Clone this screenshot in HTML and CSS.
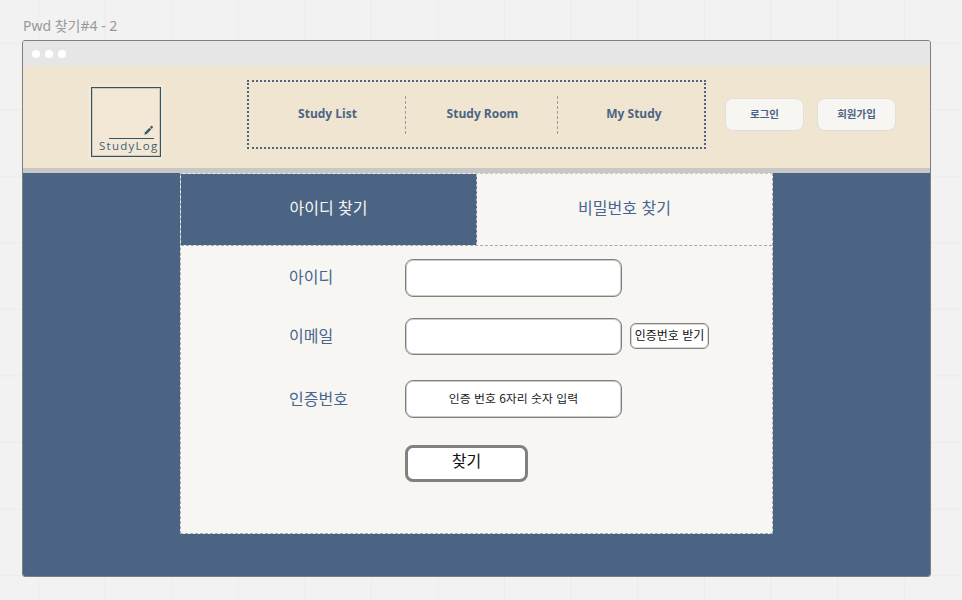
FILE: index.html
```html
<!DOCTYPE html>
<html lang="ko">
<head>
<meta charset="utf-8">
<title>Pwd 찾기#4 - 2</title>
<link rel="stylesheet" href="styles.css">
</head>
<body>
<div class="board">
  <div class="frame-title">Pwd 찾기#4 - 2</div>
  <div class="window">
    <div class="titlebar"><i class="dot"></i><i class="dot"></i><i class="dot"></i></div>
    <header class="header">
      <div class="logo-wrap">
        <div class="logo">
          <svg class="pen" width="11" height="11" viewBox="0 0 12 12"><path d="M1.5 10.5 L2.2 7.8 L7 3 L9 5 L4.2 9.8 Z" fill="#3a5f70"/><path d="M7.6 2.4 L8.8 1.2 Q9.6 .6 10.4 1.4 Q11.2 2.2 10.6 3 L9.6 4.4 Z" fill="#3a5f70"/></svg>
          <div class="logo-line"></div>
          <div class="logo-text">StudyLog</div>
        </div>
      </div>
      <nav class="nav">
        <a class="nav-item nav-a">Study List</a>
        <a class="nav-item nav-b">Study Room</a>
        <a class="nav-item nav-c">My Study</a>
      </nav>
      <div class="auth">
        <button class="auth-btn">로그인</button>
        <button class="auth-btn">회원가입</button>
      </div>
    </header>
    <div class="strip"></div>
    <main class="main">
      <section class="panel">
        <div class="tabs">
          <div class="tab tab-active">아이디 찾기</div>
          <div class="tab">비밀번호 찾기</div>
        </div>
        <div class="form">
          <label class="label row1">아이디</label>
          <div class="field row1"></div>
          <label class="label row2">이메일</label>
          <div class="field row2"></div>
          <button class="chip row2">인증번호 받기</button>
          <label class="label row3">인증번호</label>
          <div class="field row3">인증 번호 6자리 숫자 입력</div>
          <button class="submit">찾기</button>
        </div>
      </section>
    </main>
  </div>
</div>
</body>
</html>
```
FILE: styles.css
```css
* { box-sizing: border-box; }
html, body { margin: 0; padding: 0; }
body {
  width: 962px;
  height: 600px;
  overflow: hidden;
  font-family: "Noto Sans", "Noto Sans CJK KR", sans-serif;
  background-color: #f2f2f2;
}
.board {
  height: 600px;
  padding: 16px 31px 0 22px;
  background-image:
    linear-gradient(to right, #ebebeb 1px, transparent 1px),
    linear-gradient(to bottom, #ebebeb 1px, transparent 1px);
  background-size: 66.6px 66.6px;
  background-position: 38px 42.5px;
}
.frame-title {
  height: 24px;
  padding-left: 1px;
  font-size: 14px;
  line-height: 19px;
  color: #999;
}
.window {
  height: 537px;
  border: 1px solid #7f7f7f;
  border-radius: 3px;
  overflow: hidden;
  display: flex;
  flex-direction: column;
}
.titlebar {
  height: 25px;
  flex: none;
  background: #e6e6e6;
  display: flex;
  align-items: center;
  gap: 5px;
  padding-left: 9px;
}
.dot {
  width: 8px;
  height: 8px;
  border-radius: 50%;
  background: #fff;
}
.header {
  height: 102px;
  flex: none;
  background: #f0e5d0;
  display: flex;
  align-items: flex-start;
}
.logo-wrap {
  width: 224px;
  flex: none;
  padding: 18px 0 0 65px;
}
.logo {
  width: 76px;
  height: 76px;
  background: #f3e7d6;
  position: relative;
}
.logo::before {
  content: "";
  position: absolute;
  inset: 3px;
  border: 1px solid #2f5566;
  box-shadow: inset 0 0 0 1px rgba(47, 85, 102, .2);
}
.pen {
  position: absolute;
  left: 55px;
  top: 41px;
}
.logo-line {
  position: absolute;
  left: 21px;
  top: 54px;
  width: 45px;
  height: 1px;
  background: #2f5566;
}
.logo-text {
  position: absolute;
  left: 11px;
  top: 54px;
  font-family: "Open Sans", sans-serif;
  font-size: 11.5px;
  line-height: 16px;
  letter-spacing: 1.25px;
  white-space: nowrap;
  color: #3d6170;
}
.nav {
  width: 459px;
  height: 69px;
  flex: none;
  margin-top: 14px;
  border: 2px dotted #4c6484;
  display: flex;
  align-items: center;
}
.nav-item {
  height: 38px;
  padding-bottom: 3px;
  display: flex;
  align-items: center;
  justify-content: center;
  font-family: "Open Sans", sans-serif;
  font-weight: 700;
  font-size: 12px;
  color: #4c6484;
}
.nav-a { width: 157px; padding-left: 1px; border-right: 1px dashed #9a9a9a; }
.nav-b { width: 152px; padding-left: 2px; border-right: 1px dashed #9a9a9a; }
.nav-c { flex: 1; padding-left: 6px; }
.auth {
  display: flex;
  gap: 13px;
  margin: 32px 0 0 19px;
}
.auth-btn {
  width: 79px;
  height: 33px;
  padding: 0 0 2px;
  border: 1px solid #e2dfd9;
  border-radius: 8px;
  background: #f7f6f2;
  font-family: "Noto Sans CJK KR", sans-serif;
  font-weight: 700;
  font-size: 10.5px;
  color: #4c6484;
}
.strip {
  height: 5px;
  flex: none;
  background: #c8c6c6;
}
.main {
  flex: 1;
  background: #4c6484;
  padding-left: 157px;
}
.panel {
  width: 593px;
  height: 361px;
  background: #f7f6f2;
  border: 1px dashed #a9adb3;
  border-top: 1px dashed #c9c9c9;
}
.tabs {
  display: flex;
  height: 72px;
  border-bottom: 1px dashed #a9a9a9;
}
.tab {
  flex: 1;
  padding-bottom: 6px;
  display: flex;
  align-items: center;
  justify-content: center;
  font-family: "Noto Sans CJK KR", sans-serif;
  font-size: 16px;
  color: #47658f;
}
.tab-active {
  flex: none;
  width: 296px;
  background: #4c6484;
  color: #f7f6f2;
  border-right: 1px dashed #b5b9bf;
}
.form {
  display: grid;
  grid-template-columns: 116px 217px auto;
  grid-template-rows: 38px 37px 42px 64px;
  row-gap: 21px;
  padding: 13px 0 0 108px;
  align-items: center;
  justify-items: start;
}
.label {
  padding-bottom: 4px;
  font-family: "Noto Sans CJK KR", sans-serif;
  font-size: 16px;
  color: #47658f;
  grid-column: 1;
}
.row1 { grid-row: 1; }
.row2 { grid-row: 2; }
.row3 { grid-row: 3; align-self: stretch; margin-top: 4px; }
.label.row3 { display: flex; align-items: center; padding-bottom: 2px; }
.field {
  grid-column: 2;
  width: 217px;
  height: 100%;
  padding-bottom: 3px;
  background: #fff;
  border: 1px solid #808080;
  box-shadow: inset 0 0 0 1px rgba(128, 128, 128, .4);
  border-radius: 8px;
  display: flex;
  align-items: center;
  justify-content: center;
  font-family: "Noto Sans CJK KR", sans-serif;
  font-size: 11.9px;
  color: #222;
}
.field.row3 { height: auto; }
.chip {
  grid-column: 3;
  width: 79px;
  height: 26px;
  margin: -1px 0 0 8px;
  padding: 0 0 3px;
  background: #fff;
  border: 1px solid #808080;
  box-shadow: inset 0 0 0 1px rgba(128, 128, 128, .3);
  border-radius: 6px;
  font-family: "Noto Sans CJK KR", sans-serif;
  font-size: 12px;
  color: #111;
  white-space: nowrap;
}
.submit {
  grid-column: 2;
  grid-row: 4;
  align-self: start;
  width: 123px;
  height: 37px;
  margin-top: 6px;
  padding: 0 0 8px;
  background: #fff;
  border: 3px solid #808080;
  border-radius: 8px;
  font-family: "Noto Sans CJK KR", sans-serif;
  font-size: 16px;
  color: #111;
}
```
